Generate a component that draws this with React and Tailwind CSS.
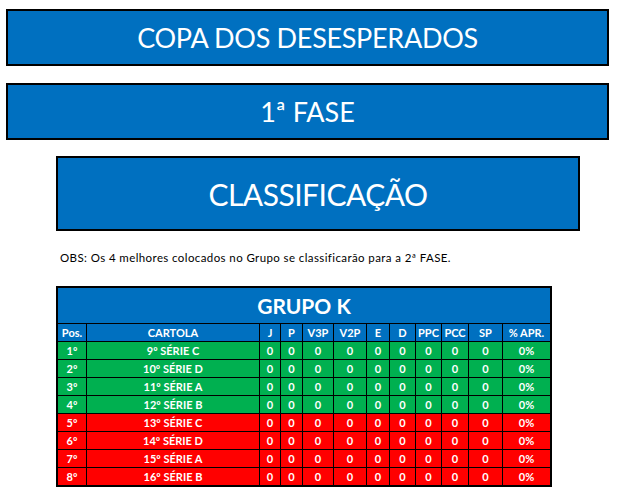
import React from "react";

const cols = [
  { k: "Pos.", w: "w-[28px]" },
  { k: "CARTOLA", w: "w-[173px]" },
  { k: "J", w: "w-[21px]" },
  { k: "P", w: "w-[22px]" },
  { k: "V3P", w: "w-[31px]" },
  { k: "V2P", w: "w-[33px]" },
  { k: "E", w: "w-[23px]" },
  { k: "D", w: "w-[26px]" },
  { k: "PPC", w: "w-[26px]" },
  { k: "PCC", w: "w-[27px]" },
  { k: "SP", w: "w-[34px]" },
  { k: "% APR.", w: "w-[48px]" },
];

const rows = [
  ["1º", "9º SÉRIE C", true],
  ["2º", "10º SÉRIE D", true],
  ["3º", "11º SÉRIE A", true],
  ["4º", "12º SÉRIE B", true],
  ["5º", "13º SÉRIE C", false],
  ["6º", "14º SÉRIE D", false],
  ["7º", "15º SÉRIE A", false],
  ["8º", "16º SÉRIE B", false],
];

function Row({ cells, bg }) {
  return (
    <div className={`flex h-[18px] border-t border-black ${bg}`}>
      {cells.map((c, i) => (
        <div
          key={i}
          className={`${cols[i].w} h-full flex items-center justify-center ${i > 0 ? "border-l border-black" : ""}`}
        >
          {c}
        </div>
      ))}
    </div>
  );
}

export default function App() {
  const font = { fontFamily: "Lato, 'Open Sans', sans-serif" };
  return (
    <div className="w-[633px] h-[497px] bg-white overflow-hidden flex flex-col" style={font}>
      <div className="ml-[6px] mt-[9px] w-[603px] h-[57px] border-2 border-black bg-[#0070C0] flex items-center justify-center text-white text-[27px] tracking-[-0.3px] leading-none">
        COPA DOS DESESPERADOS
      </div>
      <div className="ml-[6px] mt-[17px] w-[603px] h-[57px] border-2 border-black bg-[#0070C0] flex items-center justify-center text-white text-[27px] leading-none">
        1ª FASE
      </div>
      <div className="ml-[56px] mt-[16px] w-[524px] h-[75px] border-2 border-black bg-[#0070C0] flex items-center justify-center text-white text-[30px] tracking-[-0.5px] leading-none">
        CLASSIFICAÇÃO
      </div>
      <div className="ml-[60px] mt-[20px] h-[13px] text-[11.5px] tracking-[0.4px] leading-[13px] text-black">
        OBS: Os 4 melhores colocados no Grupo se classificarão para a 2ª FASE.
      </div>
      <div className="ml-[56px] mt-[22px] w-[496px] border-2 border-black text-white font-bold text-[11px] leading-none">
        <div className="h-[35px] bg-[#0070C0] flex items-center justify-center text-[21px]">
          GRUPO K
        </div>
        <Row cells={cols.map((c) => c.k)} bg="bg-[#0070C0]" />
        {rows.map(([p, n, g], i) => (
          <Row
            key={i}
            cells={[p, n, "0", "0", "0", "0", "0", "0", "0", "0", "0", "0%"]}
            bg={g ? "bg-[#00B050]" : "bg-[#FF0000]"}
          />
        ))}
      </div>
    </div>
  );
}
